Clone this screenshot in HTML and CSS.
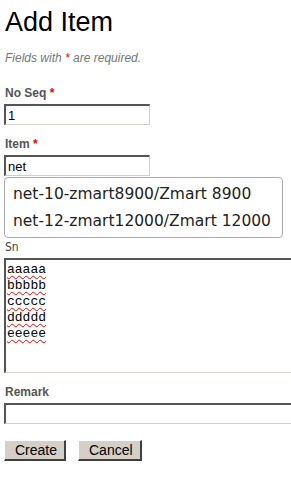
FILE: index.html
```html
<!DOCTYPE html>
<html lang="en">
<head>
    <meta charset="UTF-8">
    <meta name="viewport" content="width=device-width, initial-scale=1.0">
    <title>Add Item</title>
    <link rel="stylesheet" href="styles.css">
</head>
<body>
    <div class="form">
        <h1>Add Item</h1>
        <p class="note">Fields with <span class="required">*</span> are required.</p>

        <div class="row">
            <label for="seq">No Seq <span class="required">*</span></label>
            <input type="text" id="seq" class="short" value="1">
        </div>

        <div class="row row-item">
            <label for="item">Item <span class="required">*</span></label>
            <input type="text" id="item" class="short" value="net">
            <ul class="suggest">
                <li>net-10-zmart8900/Zmart 8900</li>
                <li>net-12-zmart12000/Zmart 12000</li>
            </ul>
        </div>

        <div class="row">
            <label class="plain" for="sn">Sn</label>
            <div class="textarea" id="sn">
                <div><span class="typo">aaaaa</span></div>
                <div><span class="typo">bbbbb</span></div>
                <div><span class="typo">ccccc</span></div>
                <div><span class="typo">ddddd</span></div>
                <div><span class="typo">eeeee</span></div>
            </div>
        </div>

        <div class="row">
            <label for="remark">Remark</label>
            <input type="text" id="remark" class="wide">
        </div>

        <div class="buttons">
            <button type="submit">Create</button>
            <button type="button">Cancel</button>
        </div>
    </div>
</body>
</html>
```

FILE: styles.css
```css
body {
    margin: 0;
    font-family: "Liberation Sans", Arial, sans-serif;
    background-color: #ffffff;
    overflow: hidden;
}
.form {
    padding-left: 4px;
}
.form h1 {
    margin: 7px 0 0 1px;
    font-size: 27px;
    font-weight: normal;
    line-height: 31px;
    color: #000;
}
.note {
    margin: 13px 0 0 1px;
    font-size: 12px;
    line-height: 14px;
    font-style: italic;
    color: #777;
}
.required {
    color: #e00;
    font-style: normal;
}
.note .required {
    font-style: italic;
}
.row {
    position: relative;
    margin-top: 12px;
}
.row:first-of-type {
    margin-top: 21px;
}
.row-item {
    margin-bottom: 64px;
}
.row label {
    display: block;
    margin: 0 0 4px 1px;
    font-size: 12px;
    line-height: 14px;
    font-weight: bold;
    color: #555;
}
.row label.plain {
    font-family: "DejaVu Sans Condensed", "DejaVu Sans", sans-serif;
    font-weight: normal;
    font-size: 12px;
    color: #444;
}
.row input {
    display: block;
    box-sizing: border-box;
    height: 21px;
    padding: 1px 2px;
    font-family: "Liberation Sans", Arial, sans-serif;
    font-size: 13px;
    color: #000;
    background: #fff;
    border-style: solid;
    border-width: 2px 1px 1px 2px;
    border-color: #555 #d4d0c8 #d4d0c8 #555;
    outline: none;
}
.row input.short {
    width: 146px;
}
.row input.wide {
    width: 320px;
}
.suggest {
    position: absolute;
    left: 0;
    top: 40px;
    width: 279px;
    box-sizing: border-box;
    margin: 0;
    padding: 3px 0 2px;
    list-style: none;
    background: #fff;
    border: 1px solid #aaa;
    border-radius: 4px;
    font-family: "DejaVu Sans", Verdana, sans-serif;
    font-size: 15.5px;
    color: #222;
}
.suggest li {
    padding: 0 8px;
    line-height: 27px;
}
.textarea {
    box-sizing: border-box;
    width: 320px;
    height: 115px;
    padding: 2px 1px;
    font-family: "Liberation Mono", "Courier New", monospace;
    font-size: 13px;
    line-height: 16px;
    color: #000;
    border-style: solid;
    border-width: 2px 1px 1px 2px;
    border-color: #555 #d4d0c8 #d4d0c8 #555;
}
.typo {
    text-decoration: underline wavy #e00;
    text-decoration-thickness: 1px;
    text-underline-offset: 2px;
}
.buttons {
    display: flex;
    gap: 12px;
    margin-top: 16px;
}
.buttons button {
    height: 21px;
    padding: 0 10px;
    font-family: "Liberation Sans", Arial, sans-serif;
    font-size: 14px;
    color: #000;
    background-color: #d4d0c8;
    border-style: solid;
    border-width: 1px 2px 2px 1px;
    border-color: #fff #404040 #404040 #fff;
    border-radius: 0;
}
.buttons button:first-child {
    width: 62px;
}
.buttons button:last-child {
    width: 64px;
}
```
